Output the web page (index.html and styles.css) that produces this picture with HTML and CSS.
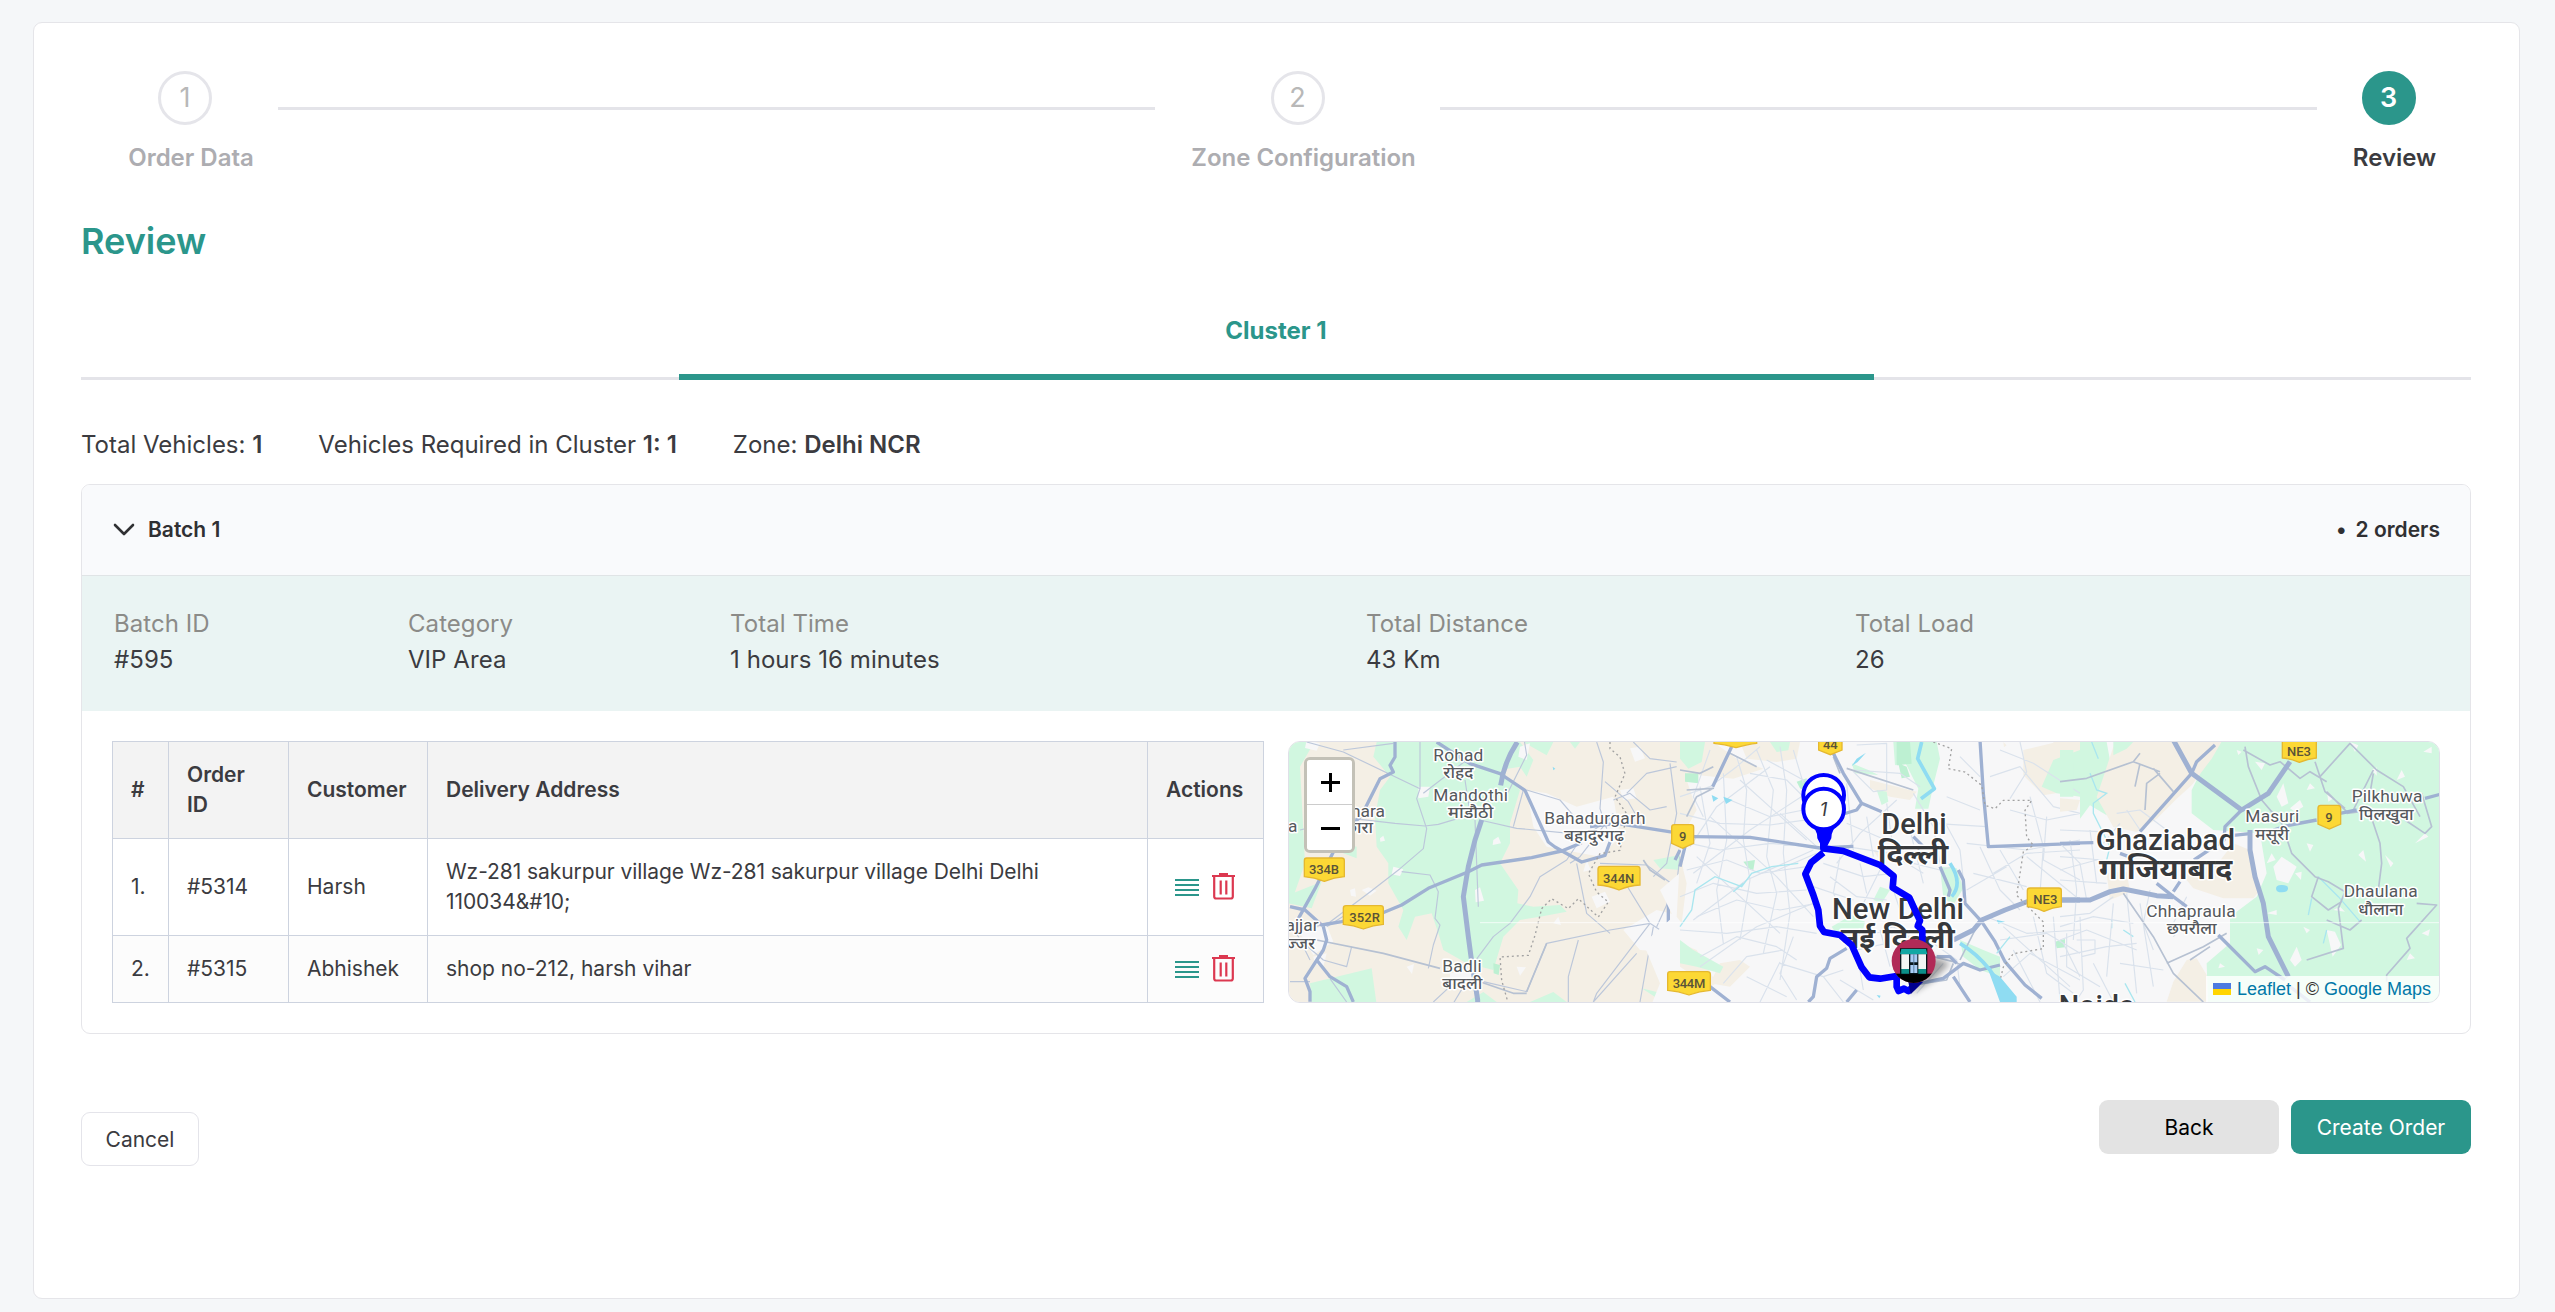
FILE: index.html
```html
<!DOCTYPE html>
<html lang="en">
<head>
<meta charset="utf-8">
<title>Review</title>
<link rel="stylesheet" href="styles.css">
</head>
<body>
<main class="card">
  <ol class="stepper">
    <li class="step step-order"><span class="step-num">1</span><span class="step-label">Order Data</span></li>
    <li class="step-line"></li>
    <li class="step step-zone"><span class="step-num">2</span><span class="step-label">Zone Configuration</span></li>
    <li class="step-line"></li>
    <li class="step step-review active"><span class="step-num">3</span><span class="step-label">Review</span></li>
  </ol>

  <h1 class="title">Review</h1>

  <div class="tabs"><button class="tab">Cluster 1</button></div>

  <div class="stats">
    <span>Total Vehicles: <b>1</b></span>
    <span>Vehicles Required in Cluster <b>1: 1</b></span>
    <span>Zone: <b>Delhi NCR</b></span>
  </div>

  <section class="batch">
    <header class="batch-head">
      <svg class="chevron" viewBox="0 0 22 14"><path d="M2 2l9 9 9-9"/></svg>
      <span class="batch-name">Batch 1</span>
      <span class="batch-count"><span>•</span><span>2 orders</span></span>
    </header>
    <dl class="summary">
      <div><dt>Batch ID</dt><dd>#595</dd></div>
      <div><dt>Category</dt><dd>VIP Area</dd></div>
      <div><dt>Total Time</dt><dd>1 hours 16 minutes</dd></div>
      <div><dt>Total Distance</dt><dd>43 Km</dd></div>
      <div><dt>Total Load</dt><dd>26</dd></div>
    </dl>
    <div class="batch-body">
      <table class="orders">
        <colgroup><col class="c-num"><col class="c-id"><col class="c-cust"><col><col class="c-act"></colgroup>
        <thead>
          <tr><th>#</th><th>Order ID</th><th>Customer</th><th>Delivery Address</th><th>Actions</th></tr>
        </thead>
        <tbody>
          <tr>
            <td>1.</td><td>#5314</td><td>Harsh</td>
            <td class="address">Wz-281 sakurpur village Wz-281 sakurpur village Delhi Delhi 110034&amp;#10;</td>
            <td><div class="actions">
              <svg class="ic-lines" viewBox="0 0 24 18"><path d="M0 2h24M0 7h24M0 12h24M0 17h24"/></svg>
              <svg class="ic-trash" viewBox="0 0 23 27"><path d="M0 3h23M7 1.2h9M2.2 3v20.5q0 2 2 2h14.6q2 0 2-2V3M8.7 7.500v14M14.300 7.500v14"/></svg>
            </div></td>
          </tr>
          <tr>
            <td>2.</td><td>#5315</td><td>Abhishek</td><td>shop no-212, harsh vihar</td>
            <td><div class="actions">
              <svg class="ic-lines" viewBox="0 0 24 18"><path d="M0 2h24M0 7h24M0 12h24M0 17h24"/></svg>
              <svg class="ic-trash" viewBox="0 0 23 27"><path d="M0 3h23M7 1.2h9M2.2 3v20.5q0 2 2 2h14.6q2 0 2-2V3M8.7 7.500v14M14.300 7.500v14"/></svg>
            </div></td>
          </tr>
        </tbody>
      </table>

      <div class="map">
        <svg class="map-canvas" viewBox="27 36 3450 780" preserveAspectRatio="none">
          <!-- west: farmland around Jhajjar and Bahadurgarh -->
          <g>
            <rect class="land" x="0" y="0" width="1500" height="860"/>
            <path class="green" d="M0 0H80L95 50 60 110 75 400 40 500 0 520ZM290 36L280 80 330 140 300 180 285 260 290 350 325 400 325 460 370 540 355 590 380 630 405 560 455 550 475 610 490 660 560 700 640 720 670 620 720 570 780 560 860 545 840 525 760 530 712 520 715 480 660 400 690 340 690 280 720 180 660 120 720 110 740 140 760 90 720 36ZM185 340l45 10v35l-40-15zM0 505l125-50-30 80-95-20zM90 760l185-45 15 110H95zM730 36h90l-20 40zM870 36h30l-15 20zM1120 390l80-15v45l-60-5zM750 816l70-30 40 30zM560 816l50-30 40 30zM1085 775l60 15 60 10v20h-50z"/>
            <path class="pale" d="M740 180l60 10 90 40 110-30 20 120-60 60-160-30-40-60zM1030 600l100-60 80 20v110l-130-10zM935 500l40-15 15 30-40 20zM585 480l15-8 12 40-25 5zM60 610l80-25 20 50-60 40zM415 170h35l-5 30-30 5zM640 330l15-10 8 20-25 5zM300 325l10-8 5 15-14 3zM245 480l20-8 25 10-20 15zM720 50l30-10-10 50-25-10zM790 300l15-12 8 18-18 8zM1050 55l30-5 15 35-30 10zM1020 180l40-5 10 30-40 5zM80 30l40 10-10 22-35-8zM510 730l70-10v40l-70-5zM210 480l15-5 3 25-15-3zM100 680l40-10-10 40-25-10zM340 410l30 8-10 20-25-5zM710 710l28 2-18 25zM820 580l15-20 8 25zM920 390l12 30-22 5zM380 710l22-8-6 30z"/>
            <path class="green2" d="M640 700l20 5-4 30-15-5z"/>
            <path class="water" d="M818 110l8 6-6 5zM345 420l15 8"/>
            <path class="line thin" d="M80 36l110 30 230 110-10 30 30 90-10 60-70 60-90 70-120 90-60 20M420 36v140M190 60l150-20M430 190l130-100M215 265l130 15 90 8 40-5 100-30M600 270l110 25 160 15M365 425l85 10 25 50-10 80 15 20-20 60-15 70M585 270l5 130 5 130M555 150l15 100M700 290l30-110M680 195l60-120-10-60M60 300l80-20M60 630l70 60 70 20 15-60M140 590l80-50M50 610l40 80M580 700l60-80 50-40 60-80 30-60 80-50 40-60 70-50M870 400l30-20 100-130M950 36l20 60-10 140 20 60M975 155l70 60 40 70M1040 190l60-60 90-20M1000 210l50-20 60 50 50-10M1170 100l20 150-30 150-40 40M960 400l140 5 80 60M890 400l30 150 70 60M1030 450l80 130 90 60M1110 580l-160 210-10 26M1110 580l-120 20-190 40-60 145-130-30M1120 590l-40 226M895 630l-30 110v76M1130 590l60-130 10-80M30 755h60M200 816l-50-70M520 760l-60 56M550 770l-30 50M740 180l100 30 60 70M1060 36l50 50 80 10M1070 670l-130 146M1170 670l30-80"/>
            <path class="line mid" d="M110 630l200 40 170 45M600 755l100 35h40M800 640l-60 145M1090 390l20 30 45 30"/>
            <path class="line road" d="M345 36v45l-15 25 10 20-40 20-55 110-60 60-40 80-40 80-50 90M30 530l45 10 50 45 60-10 120-25 60-25 80-50 120-50 40-20 150-22 90-20 60-25M130 590l10 40-10 30-55 85 15 40v30M110 690l40 50 50 30 20 46M470 36l100 65 90 30 75 50 70 155 20 15 80 45 70-20 15-40M930 290l80-10 190 30M1165 515v75l30 10v120M1200 360l-15 30"/>
            <path class="line big" d="M712 36q-40 60-50 130M605 270l-20 60-20 80-15 90 15 120 8 60 20 130v10"/>
            <path class="border" d="M990 36l0 20 30 25 15 50-30 70 35 50-20 110-60 10-35 60 25 55 35 30-30 45-60-55-30 30-50-30-30 30-20 80-20 60-85 5 5 70 20 70"/>
          </g>
          <!-- centre: Delhi -->
          <g transform="translate(1200 0)">
            <path class="pale" d="M60 0H1240V860H-100L-60 760-110 640-20 560-60 480 10 420 0 330 50 240 20 150Z"/>
            <path class="land" d="M0 36h100l70 50 80 30-90 30L0 130ZM180 36h180l-10 50-60 10-90-10zM570 150l60 15 80 20-20 25-60-10-60-25zM1030 60l100-24h70v70l-50 80-60 10-60-60zM0 380l20 80-15 120-15-20zM120 700l60-10 30 20-60 60-60-10zM1120 36h80v40h-80zM970 36l10 10-8 6zM580 360l20 5-5 20zM0 640l50 20 60 100-20 10-90-60z"/>
            <path class="green" d="M0 36h75l-10 60-40 20-25-30zM270 36h60l-5 25-35 5zM640 36h130l10 50-20 80-15 70h-40l10-60-40-80-30 10zM1120 90l80-30v140l-70-10-45-20zM780 410l50 5 20 60-30 50-30-20zM840 630l70 30 50 20v60l-60-20-50-40zM0 630l40 30 90 50-10 20-70-20-50-10zM455 590l60-35 40 20-10 40-70 5zM580 510l20-40 30 10-25 40zM515 100l50 20 30 15-70-5zM590 180l30 5 5 30-20 10z"/>
            <path class="green2" d="M650 36h40l5 65-45 5zM15 130h40v30l-40-5zM655 100l25 10 10 30-25 5zM350 155l30-10v40l-20-10zM190 395l35-5-5 30-15-5zM1125 635l30-8v25l-25 3z"/>
            <path class="line street" d="M0 200l90-30 80-60 70-60M0 250l120 30 150 5 140-20M30 340l90 20 150-20 120 10M20 420l120-30 100 40 140-20M0 500l100-40 130 30 150-10M50 560l120-50 130 30 110-20M0 600l140 10 150-20 120 20M60 680l110-60 120 30 60 40M170 80l30 100-10 150 20 120-30 180M230 60l50 120-20 200 30 110-40 180M300 50l20 130-10 190 20 180-30 200M130 130l10 200-30 150 20 160M60 170l30 170-40 120M260 90l110 60 110 10M210 130l110 20 60 60M150 210l120 50 100-20M340 60l30 100M500 160l20 200M500 280l140 60 100 20M560 260l20 120M620 220l20 140M430 400l120 40 90-10M450 440l80 60 90 10M400 470l120 40M480 380l-20 110 30 60M540 400l20 90M600 420l-60 120M690 300l40 160M640 480l30 90M700 400l80 20 40-10M530 45l90-5v140l-40 5-60-60M520 120l140 10 60 40M700 190l60 100 20 110M780 250l60 110 10 90M840 80l60 60M800 200l100 40M760 280l160 10M860 340l180 20 160-30M940 430l100-60 160-10M860 480l120-70M900 350l60 130 60 60M960 360l70 120M880 430l160 40M1050 200l40 150-10 140M960 60l100 40 140 90M930 140l90-30 100 120 80 20M1020 36l20 90-50 80M990 240l110 30 100-20M1100 260l-10 130 110 60M920 560l120 50 160-10M960 630l140-20 100 60M1000 660l80 156M1060 560l40 170 80 60M1120 560l20 250M1150 640l50 100M970 740l80-70 150 80M560 620l80-30 60 40M600 600l30 110M620 640l-90 20 20 120M340 620l-40 110 50 80M300 700l130 40 60-20M200 740l120 60M130 760l70-80 110-20M430 740l60 76M480 750l100 60M760 640l70 50 10 80M790 700l-80 90M240 816l60-120"/>
            <path class="line street" d="M90 60l-50 140 30 60M270 110l-160 120-80 120M380 190l-170 110-170 130M400 360l-200 90-160 120M400 520l-170 70-170 120M180 150l200 180M90 260l200 180 110 120M50 380l250 230M270 430l140-60M300 250l110 100M650 210l-110 100-70 90M730 430l-100-60-130-20M1040 380l160 130M970 590l200 180"/>
            <path class="line mid" d="M0 120l60 10 40-20M150 70l80 40M20 180l80-5-50 25-30 60M500 115l200 65M460 80l20 50M890 590l-50 100M760 680l60 15 25 10M820 700l-20 50-70 10"/>
            <path class="line road" d="M155 50L98 170M40 320l170 2 210 32 100-5M460 70l30 60 55 90 60 25M545 220l-15 20-50 15M0 410l15-60M500 655l-50 30-10 30-30 25-10 60-15 16M530 780l-30 36M780 410l30 70-5 20M835 420l15 30 5 70 50 55 40 60 30 60 60 70 50 40M960 705l-60 15-50-20-60 45-70 15M820 740l50 76M90 770l60 46M770 680h40l20 20M1200 340l-275 10-15-160-10-160M700 320l30 30"/>
            <path class="line big" d="M820 630l60-30 25-30 70-30 80-30M1110 510h90l80-2M710 640l10-10"/>
            <path class="border" d="M760 36l55 20-10 60 50 10 50 40 10 60 30 10 25-25h85l-20 30 5 80 20 25-30 20-20 130 20 20 60 60v80l-90 15-30 40-15 60 20 70"/>
            <path class="river" d="M725 36l-12 50 50 90-40 30M810 400q40 60 5 100M840 640q50 30 90 80l60 90"/>
            <path class="water" d="M515 108l15-22 28-18-25 28zM925 720l35 20 50 60v16h-50zM95 195l20 10-15 10zM130 200l28 10-20 12zM950 570l25 5-20 6zM590 795l12 2-4 8z"/>
            <path class="creek" d="M0 590l35-50 10-60 60-40 80 30 30-40 60-20 80-10M950 670l40-50M160 485l30-25"/>
          </g>
          <!-- east: Ghaziabad district -->
          <g transform="translate(2340 0)">
            <rect class="green" x="60" y="0" width="1160" height="860"/>
            <path class="pale" d="M60 36L340 0 490 10 440 90 395 180 395 250 460 300 600 310 620 430 590 500 510 560 510 640 440 700 445 860H60Z"/>
            <path class="green" d="M60 36h80l20 110-20 110-50-30-30 40zM0 60h40v140H0z"/>
            <path class="land" d="M160 50l60-14h160l110-10-35 60-60 80-45 40-60 60-60 40-70-15-50-90 20-60zM0 205l60 5-10 30-50 5zM520 340l50 20 30 120-20 25-90 0-90-30-40-50 110-20zM380 690l30-5 30 50v80H320l20-60zM140 430l60-5 10 60-60 25z"/>
            <path class="green" d="M160 36l60 0-20 20-40 20z"/>
            <path class="pale" d="M585 95l30 5-10 20zM650 200l20-40 15 60-20 10zM690 235l30-25 10 20-25 15zM640 410l25-30 45 30-25 50-35-10zM740 340l20 5-10 20zM705 430l20-5-2 25zM895 375l15-15 8 35zM975 375l25 25-8 12zM1065 340l30-30 10 10zM1090 65l25-15v20zM1010 150l15-30 10 20zM800 600l25 5 18 40-25 35zM690 690l20-40 15 40-20 20zM820 540l20-10 15 15zM1040 690l10-20 15 15zM800 180l20 25-15 10zM620 400l15-30 12 20zM740 80l10-20 15 30zM870 36l15 30 10-20zM935 120l15-8v25zM730 590l20 10-10 10zM960 540l8-10 7 18zM590 655l20 5-14 15zM1085 610l25-12-5 20zM480 700l15 10-20 5zM620 550l30-10 0 15zM530 60l15 5-10 10zM740 180l10-20 15 15z"/>
            <path class="water" d="M648 476q0-12 18-11 20 0 18 12-2 10-18 10-18 0-18-11z"/>
            <path class="creek" d="M90 130l20 50 30 10-40 30v30l50 100-10 40M775 440l60 60 65 75M745 555l10-50M95 36l20 50M790 640l10-40M195 760l30 56M190 600l30 20M155 570v25"/>
            <path class="line street" d="M0 300l120 5M0 340l60 60 20 110M0 380l130 10M0 420l110-30M0 450l140 10M30 330l20 150-10 150M90 300l20 160M0 560l90-10 70-50M0 590l100-30 120 20M0 630l80-30 150 60M60 560l10 220-20 30M0 680l140-30 90-10M20 610v100l100 60M160 520l-20 220M200 490l30 300M240 520l40 250M50 630h55v40l-40 10M180 700l130 20M100 700l60 116M200 240l40 60M170 250l70-10 80 60M130 340l50-60M270 480l-20 100 30 80M380 500l-40 80M400 560l-60 60"/>
            <path class="line mid" d="M0 155l80-10 140-50 80 30M220 95l20-25M240 100l-15 70M300 130l-40 30-5 80M340 185l-60-70M190 490l90 130 60 110 90 86M555 50l10 60 40 100 60 70 30 90 70 70 40 15 50 30-20 50 15 120-110 35M775 440l-20 60 50 40 40-25M550 60l80 45 30-10 60 50 30-20 50 30M765 95l30 90 60 50M780 140l90-100 80 80 80 50 50 90M940 120l-40 80-20 40M940 130l-10 60M930 250l30 90 5 60-10 80M1085 190l30 100-20 20-60-40M905 570l-35 30-70-30M1070 520l60 5-90 100 10 30-70 80v20M800 185l60 60M320 700l110-50 70-40M390 690l60-40M860 250l80-10"/>
            <path class="line road" d="M465 45l-55 50-15 35-155 175M395 130l150 110M0 340l100-2M290 460l50 40 40 30M545 240l-50 50-3 40-90 60M520 316l50-5M640 300l50-15 80-15M840 250l50-10M1095 205l45-12M475 615l110 110 30-15 60 40M340 485l20-30M690 770l60 46M180 370l40 15"/>
            <path class="line big" d="M340 30l55 100 150 110 80-50 65-95M570 300v60l15 80 25 80 15 100 60 120M0 510h90l60-25 40-8 100 20 50 3"/>
          </g>
          <path class="seam" d="M600 578H3500"/>

          <!-- highway shields -->
          <g class="shield">
            <path d="M80 384h105q8 0 8 8v48q-30 2-60 14-30-12-60-14v-48q0-8 7-8z"/><text x="132" y="432" textLength="90">334B</text>
            <path d="M198 527h104q8 0 8 8v48q-30 2-60 14-30-12-60-14v-48q0-8 8-8z"/><text x="254" y="576" textLength="92">352R</text>
            <path d="M962 409h110q8 0 8 8v48q-32 2-63 15-32-13-63-15v-48q0-8 8-8z"/><text x="1016" y="459" textLength="94">344N</text>
            <path d="M1183 284h50q8 0 8 8v48l-33 15-33-15v-48q0-8 8-8z"/><text x="1208" y="333">9</text>
            <path d="M1170 725h112q9 0 9 8v48q-32 2-64 14-32-12-64-14v-48q0-8 7-8z"/><text x="1227" y="774" textLength="98">344M</text>
            <path d="M1302 20h128v20q-25 2-62 13-35-10-66-13z"/>
            <path d="M1616 10h70v50l-35 14-35-14z"/><text x="1651" y="56">44</text>
            <path d="M2250 474h86q8 0 8 8v48q-26 2-52 14-26-12-50-14v-48q0-8 8-8z"/><text x="2296" y="523" textLength="72">NE3</text>
            <path d="M3007 20h102v64q-26 2-51 13-26-11-51-13z"/><text x="3057" y="78" textLength="72">NE3</text>
            <path d="M3122 226h52q8 0 8 8v48l-34 15-34-15v-48q0-8 8-8z"/><text x="3147" y="275">9</text>
          </g>

          <!-- place names -->
          <g class="town">
            <text x="535" y="92" textLength="150">Rohad</text><text class="hi" x="535" y="145" textLength="90" lengthAdjust="spacingAndGlyphs">रोहद</text>
            <text x="572" y="212" textLength="224">Mandothi</text><text class="hi" x="572" y="265" textLength="136" lengthAdjust="spacingAndGlyphs">मांडौठी</text>
            <text x="945" y="281" textLength="304">Bahadurgarh</text><text class="hi" x="942" y="333" textLength="180" lengthAdjust="spacingAndGlyphs">बहादुरगढ़</text>
            <text x="264" y="260">hara</text><text class="hi" x="237" y="308">छारा</text>
            <text x="38" y="306">a</text>
            <text x="66" y="604">ajjar</text><text class="hi" x="62" y="656">ज्जर</text>
            <text x="546" y="726" textLength="118">Badli</text><text class="hi" x="547" y="778" textLength="120" lengthAdjust="spacingAndGlyphs">बादली</text>
            <text x="2733" y="560" textLength="268">Chhapraula</text><text class="hi" x="2735" y="612" textLength="150" lengthAdjust="spacingAndGlyphs">छपरौला</text>
            <text x="2977" y="277" textLength="162">Masuri</text><text class="hi" x="2976" y="330" textLength="102" lengthAdjust="spacingAndGlyphs">मसूरी</text>
            <text x="3321" y="217" textLength="212">Pilkhuwa</text><text class="hi" x="3319" y="270" textLength="164" lengthAdjust="spacingAndGlyphs">पिलखुवा</text>
            <text x="3302" y="502" textLength="222">Dhaulana</text><text class="hi" x="3302" y="554" textLength="136" lengthAdjust="spacingAndGlyphs">धौलाना</text>
          </g>
          <g class="city">
            <text x="1902" y="313" textLength="196" lengthAdjust="spacingAndGlyphs">Delhi</text><text class="hi" x="1899" y="402" textLength="212" lengthAdjust="spacingAndGlyphs">दिल्ली</text>
            <text x="1854" y="566" textLength="396" lengthAdjust="spacingAndGlyphs">New Delhi</text><text class="hi" x="1853" y="655" textLength="342" lengthAdjust="spacingAndGlyphs">नई दिल्ली</text>
            <text x="2656" y="359" textLength="418" lengthAdjust="spacingAndGlyphs">Ghaziabad</text><text class="hi" x="2657" y="448" textLength="400" lengthAdjust="spacingAndGlyphs">गाजियाबाद</text>
            <text x="2450" y="857" textLength="228" lengthAdjust="spacingAndGlyphs">Noida</text>
          </g>

          <!-- delivery route -->
          <path class="route" d="M1630 330V355L1690 363 1800 405 1841 438 1838 473 1888 503 1905 540 1920 572 1913 588 1927 600V640L1910 760 1885 783 1872 776 1856 783 1850 770V738L1800 746 1768 742 1745 712 1715 645 1680 615 1632 606 1620 588 1615 540 1600 495 1576 432 1593 398 1630 368"/>

          <!-- stop pins -->
          <g class="pin">
            <path class="pin-tail" d="M1570 210L1632 345 1694 210Z"/>
            <circle cx="1631" cy="196" r="61"/>
            <path class="pin-tail" d="M1582 275Q1615 300 1612 325L1626 352H1640L1654 325Q1652 300 1682 275Z"/>
            <circle cx="1631" cy="237" r="61"/>
            <text x="1631" y="258">1</text>
          </g>
          <!-- store marker -->
          <defs>
            <clipPath id="store-clip"><circle cx="1901" cy="693" r="66"/></clipPath>
            <filter id="soft" x="-50%" y="-50%" width="200%" height="200%"><feGaussianBlur stdDeviation="9"/></filter>
          </defs>
          <path class="store-shadow" d="M1890 795L1960 680 2010 700 1960 750Z" filter="url(#soft)"/>
          <path class="store-tip" d="M1885 755h45l-38 38z"/>
          <g clip-path="url(#store-clip)">
            <rect x="1830" y="620" width="140" height="140" fill="#b12a57"/>
            <rect x="1830" y="731" width="140" height="40" fill="#000"/>
            <path d="M1860 655h82v78h-82z" fill="#07141a"/>
            <path d="M1864 657h74l4 16h-82z" fill="#12a8a4"/>
            <path d="M1864 673h23v44h-23zM1915 673h23v44h-23z" fill="#f1f5f4"/>
            <path d="M1864 717h23v14h-23zM1915 717h23v14h-23z" fill="#0b8f88"/>
            <path d="M1891 673h21v24h-21zM1891 705h21v24h-21z" fill="#a9cdf6"/>
            <path d="M1900 673h3v56h-3z" fill="#5b7f9c"/>
          </g>
        </svg>
        <div class="zoom">
          <button aria-label="Zoom in"><svg viewBox="0 0 19 19"><path d="M0 9.500h19M9.500 0v19"/></svg></button>
          <button aria-label="Zoom out"><svg viewBox="0 0 19 19"><path d="M0 9.500h19"/></svg></button>
        </div>
        <div class="attribution">
          <svg viewBox="0 0 18 12"><path fill="#4c7be1" d="M0 0h18v6H0z"/><path fill="#ffd500" d="M0 6h18v6H0z"/></svg>
          <span><a>Leaflet</a> | © <a>Google Maps</a></span>
        </div>
      </div>
    </div>
  </section>

  <footer class="footer">
    <button class="btn btn-cancel">Cancel</button>
    <div class="footer-right">
      <button class="btn btn-back">Back</button>
      <button class="btn btn-create">Create Order</button>
    </div>
  </footer>
</main>
</body>
</html>
```

FILE: styles.css
```css
* { box-sizing: border-box; }

body {
  margin: 0;
  height: 1312px;
  padding: 22px 35px 13px 33px;
  background: #f5f7f9;
  color: #3b3b40;
  font-family: Inter, "Noto Sans", sans-serif;
  font-size: 21px;
}

button { font-family: inherit; border: 0; padding: 0; margin: 0; }

.card {
  height: 1277px;
  padding: 48px 48px 0 47px;
  background: #fff;
  border: 1px solid #e5e5e9;
  border-radius: 9px;
}

/* stepper */
.stepper {
  display: flex;
  margin: 0;
  padding: 0;
  list-style: none;
  height: 143px;
}
.step { display: flex; flex-direction: column; align-items: center; }
.step-order { width: 197px; padding-left: 23px; }
.step-zone { width: 285px; padding-left: 12px; }
.step-review { width: 154px; padding-left: 1px; }
.step-num {
  width: 54px;
  height: 54px;
  border: 3px solid #e5e5ea;
  border-radius: 50%;
  color: #b8b8b8;
  font-size: 27px;
  line-height: 48px;
  text-align: center;
  margin-right: 12px;
}
.step-label {
  margin-top: 15px;
  font-size: 24px;
  line-height: 36px;
  font-weight: 600;
  color: #adadb1;
  letter-spacing: -0.02px;
  white-space: nowrap;
}
.step-line { flex: 1; height: 3px; margin-top: 36px; background: #e4e4e9; }
.active .step-num { background: #2b968b; border-color: #2b968b; color: #fff; font-weight: 600; }
.active .step-label { color: #3b3b40; }

.title { margin: 0; color: #2b968b; font-size: 36px; line-height: 54px; font-weight: 600; }

.tabs {
  display: flex;
  justify-content: center;
  height: 112px;
  border-bottom: 3px solid #e4e4e9;
}
.tab {
  width: 1195px;
  height: 112px;
  padding-top: 19px;
  background: none;
  border-bottom: 6px solid #2b968b;
  color: #2b968b;
  font-size: 24px;
  font-weight: 700;
}

.stats {
  display: flex;
  gap: 56px;
  height: 104px;
  padding-top: 47px;
  font-size: 24px;
  line-height: 36px;
}
.stats b { font-weight: 600; }

/* batch */
.batch { border: 1px solid #e5e5e9; border-radius: 9px; overflow: hidden; height: 550px; }
.batch-head {
  display: flex;
  align-items: center;
  height: 91px;
  padding: 0 30px 1px 31px;
  background: #f9fafc;
  border-bottom: 1px solid #e0e4e6;
  color: #303033;
  font-weight: 600;
}
.chevron { width: 22px; height: 14px; margin-right: 13px; fill: none; stroke: #303033; stroke-width: 2.6; stroke-linecap: round; stroke-linejoin: round; }
.batch-count { display: flex; gap: 9px; margin-left: auto; }

.summary {
  display: grid;
  grid-template-columns: 294px 322px 636px 489px 1fr;
  height: 135px;
  margin: 0;
  padding: 30px 0 0 32px;
  background: #eaf4f3;
  font-size: 24px;
  line-height: 36px;
  letter-spacing: 0.06px;
}
.summary dt { color: #8b8b88; }
.summary dd { margin: 0; }

.batch-body { display: flex; gap: 24px; padding: 30px 30px 0 30px; }

.orders {
  width: 1152px;
  table-layout: fixed;
  border-collapse: collapse;
  font-size: 21px;
  line-height: 30px;
}
.orders th, .orders td { border: 1px solid #cdd3df; padding: 18px; text-align: left; }
.orders th { background: #f3f3f3; font-weight: 600; }
.orders tbody tr:nth-child(2) { background: #fcfcfc; }
.orders .address { letter-spacing: -0.07px; }
.orders .c-num { width: 56px; }
.orders .c-id { width: 120px; }
.orders .c-cust { width: 139px; }
.orders .c-act { width: 116px; }
.orders th:last-child { padding-right: 0; }
.actions { display: flex; align-items: center; gap: 13px; height: 30px; padding: 0 0 1px 9px; }
.ic-lines { flex: none; width: 24px; height: 18px; stroke: #2b968b; stroke-width: 2; }
.ic-trash { flex: none; width: 23px; height: 27px; margin-bottom: 1px; fill: none; stroke: #dc3850; stroke-width: 2.2; }

/* map */
.map {
  position: relative;
  flex: 1;
  height: 262px;
  border: 1px solid #dfe0e8;
  border-radius: 12px;
  overflow: hidden;
}
.map-canvas { display: block; width: 100%; height: 100%; font-family: Roboto, "Noto Sans Devanagari", "Noto Sans", sans-serif; }
.land { fill: #f4efe5; }
.green { fill: #d1f7e0; }
.green2 { fill: #bdf0d2; }
.pale { fill: #f7f7f8; }
.water { fill: #8fdcf2; }
.line { fill: none; stroke: #9fb1d2; stroke-linejoin: round; }
.thin { stroke: #bcc7da; stroke-width: 3.500; }
.street { stroke: #dae2ec; stroke-width: 3.500; }
.mid { stroke: #b6c1d2; stroke-width: 5; }
.road { stroke-width: 10; }
.big { stroke-width: 15; }
.border { fill: none; stroke: #a2a2a2; stroke-width: 4; stroke-dasharray: 6 9; }
.river { fill: none; stroke: #8fdcf2; stroke-width: 11; stroke-linejoin: round; }
.creek { fill: none; stroke: #a9e6ef; stroke-width: 4; }
.seam { stroke: #fff; stroke-width: 3; opacity: .7; }
.shield path { fill: #fcd835; stroke: #e5b830; stroke-width: 4; }
.shield text { font-size: 39px; font-weight: 500; fill: #5a5338; text-anchor: middle; }
.town text, .city text { text-anchor: middle; paint-order: stroke; stroke: #fff; stroke-width: 9px; stroke-linejoin: round; }
.town text { font-size: 52px; fill: #55585c; }
.town .hi { font-size: 50px; font-weight: 500; }
.city text { font-size: 88px; font-weight: 500; fill: #37393c; }
.city .hi { font-size: 84px; font-weight: 700; }
.route { fill: none; stroke: #0000fe; stroke-width: 20; stroke-linejoin: round; }
.pin circle { fill: #fff; stroke: #0000fe; stroke-width: 12; }
.pin-tail { fill: #0000fe; }
.pin text { font-family: Inter, sans-serif; font-style: italic; font-size: 56px; fill: #3b3b40; text-anchor: middle; }
.store-shadow { fill: #000; opacity: .35; }
.store-tip { fill: #00008f; }

.zoom {
  position: absolute;
  left: 15px;
  top: 15px;
  width: 51px;
  border: 3px solid #c3c1b7;
  border-radius: 6px;
  overflow: hidden;
}
.zoom button {
  display: flex;
  align-items: center;
  justify-content: center;
  width: 45px;
  height: 45px;
  padding: 1px 0 0 2px;
  background: #fff;
}
.zoom button:first-child { border-bottom: 1px solid #ccc; }
.zoom svg { width: 19px; height: 19px; stroke: #000; stroke-width: 3; }

.attribution {
  position: absolute;
  right: 0;
  bottom: 0;
  display: flex;
  align-items: center;
  gap: 6px;
  height: 26px;
  padding: 0 8px 0 7px;
  background: rgba(255, 255, 255, .8);
  color: #333;
  font: 18px/25px "Liberation Sans", Arial, sans-serif;
  white-space: nowrap;
}
.attribution svg { width: 18px; height: 12px; }
.attribution a { color: #0078a8; }

/* footer */
.footer { display: flex; justify-content: space-between; padding-top: 66px; }
.footer-right { display: flex; gap: 12px; }
.btn { height: 54px; border-radius: 9px; font-size: 21px; }
.btn-cancel { width: 118px; margin-top: 12px; background: #fff; border: 1px solid #e4e4ea; color: #3b3b40; }
.btn-back { width: 180px; background: #e3e3e3; color: #000; }
.btn-create { width: 180px; background: #2b968b; color: #fff; }
```
